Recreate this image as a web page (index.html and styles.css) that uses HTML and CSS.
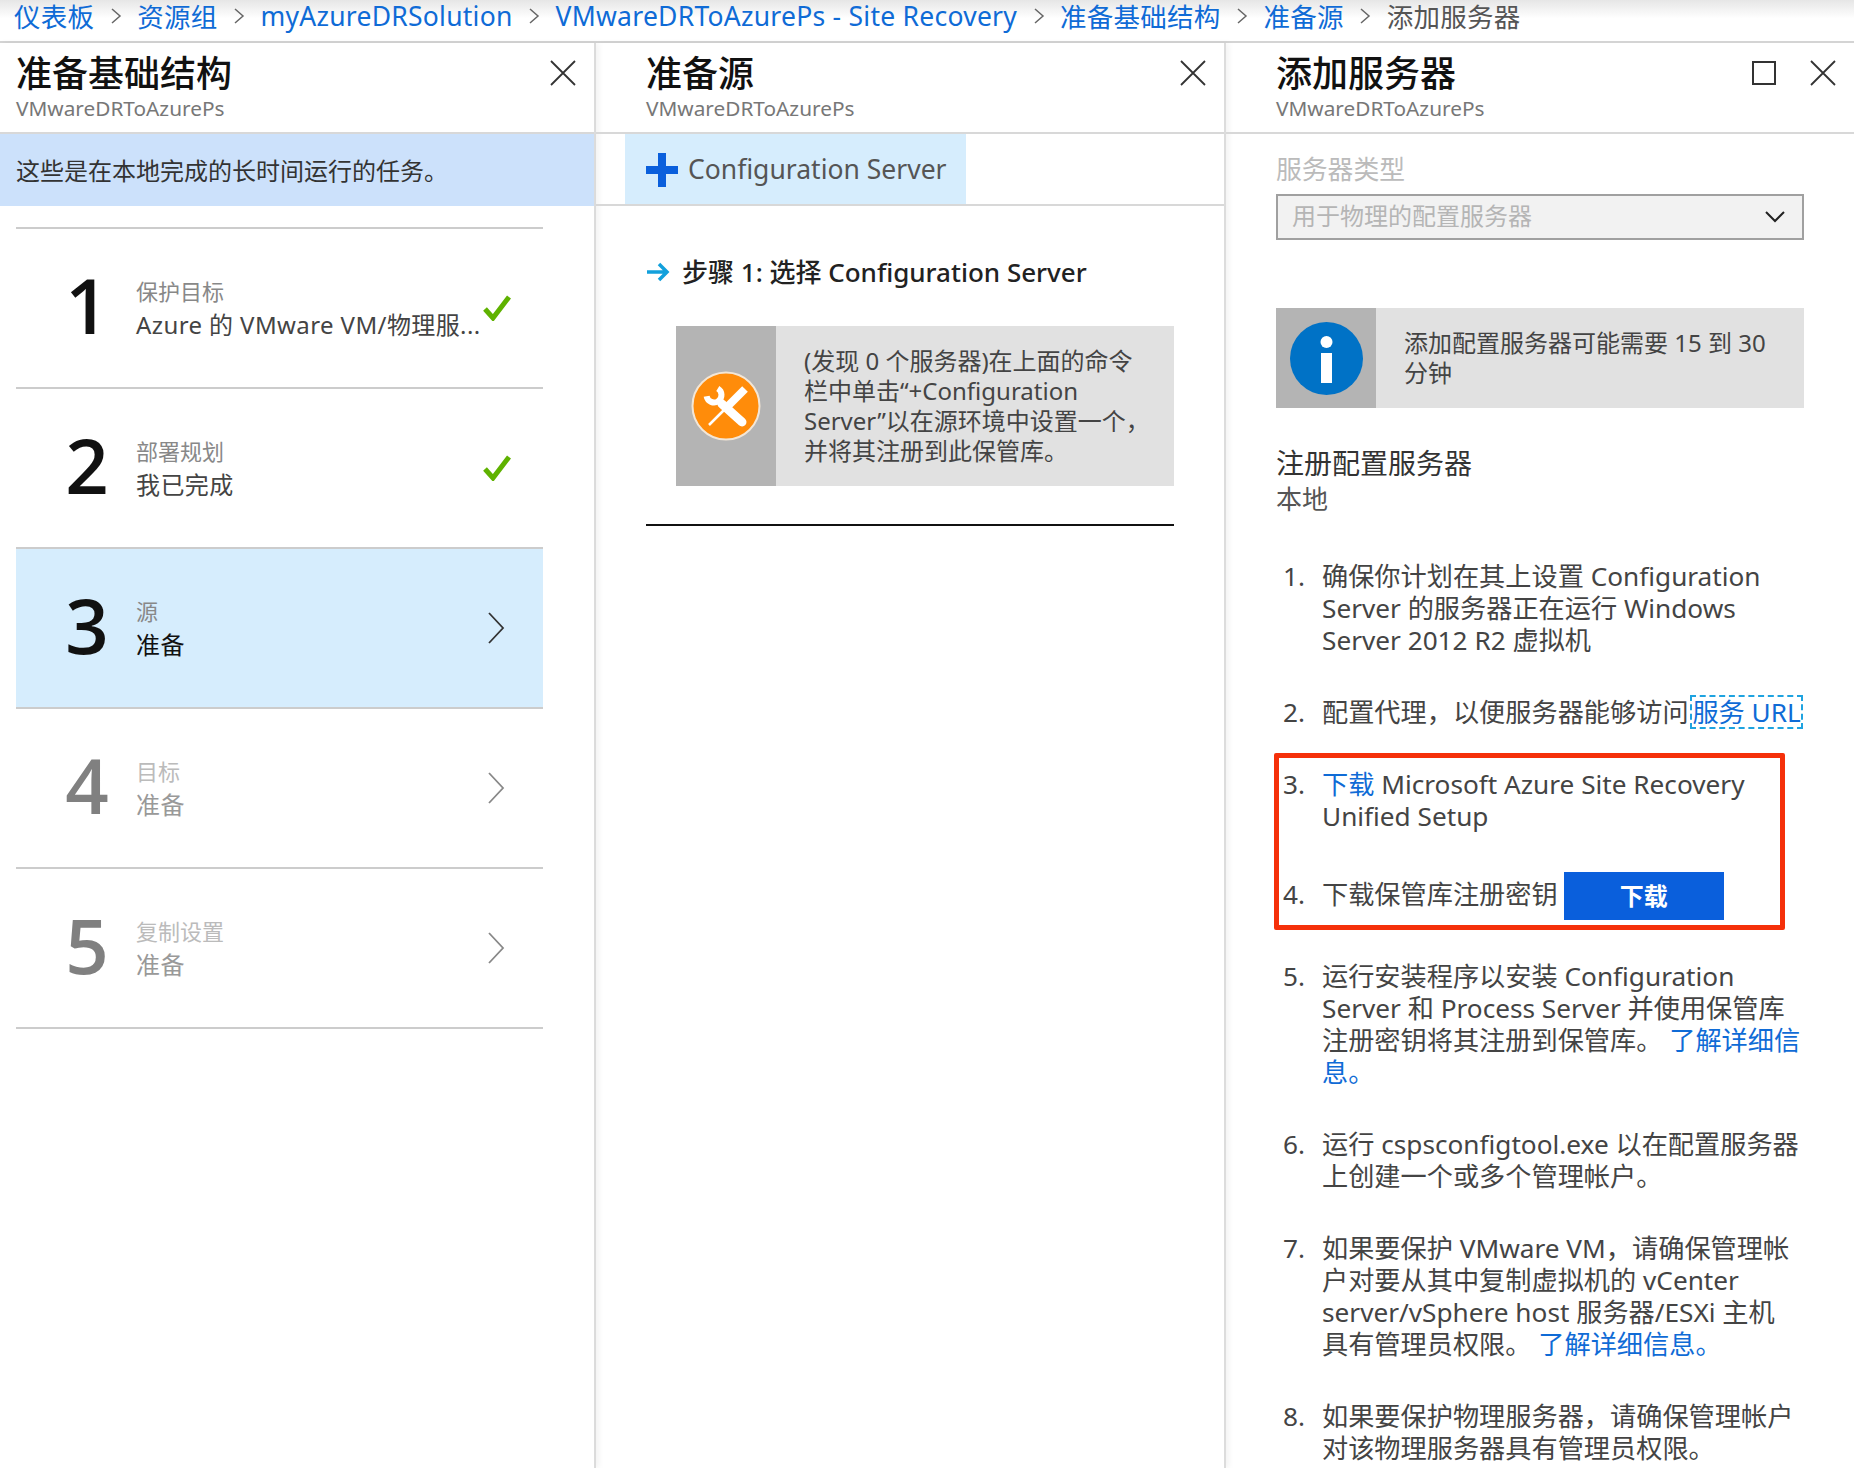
FILE: index.html
```html
<!doctype html>
<html lang="zh-CN">
  <head>
    <meta charset="utf-8">
    <title>添加服务器</title>
    <link rel="stylesheet" href="styles.css">
  </head>
  <body>
    <nav class="crumbs">
      <a href="#">仪表板</a>
      <svg class="crumb-sep" viewBox="0 0 12 18"><path d="M2 2l8 7-8 7"/></svg>
      <a href="#">资源组</a>
      <svg class="crumb-sep" viewBox="0 0 12 18"><path d="M2 2l8 7-8 7"/></svg>
      <a href="#">myAzureDRSolution</a>
      <svg class="crumb-sep" viewBox="0 0 12 18"><path d="M2 2l8 7-8 7"/></svg>
      <a href="#">VMwareDRToAzurePs - Site Recovery</a>
      <svg class="crumb-sep" viewBox="0 0 12 18"><path d="M2 2l8 7-8 7"/></svg>
      <a href="#">准备基础结构</a>
      <svg class="crumb-sep" viewBox="0 0 12 18"><path d="M2 2l8 7-8 7"/></svg>
      <a href="#">准备源</a>
      <svg class="crumb-sep" viewBox="0 0 12 18"><path d="M2 2l8 7-8 7"/></svg>
      <span>添加服务器</span>
    </nav>

    <main class="panels">
      <section class="panel panel-infra">
        <header class="head">
          <div class="head-text">
            <h1>准备基础结构</h1>
            <div class="sub">VMwareDRToAzurePs</div>
          </div>
          <svg class="close" viewBox="0 0 26 26"><path d="M1 1l24 24M25 1L1 25"/></svg>
        </header>
        <div class="band">这些是在本地完成的长时间运行的任务。</div>
        <div class="steps">
          <div class="step">
            <div class="num">1</div>
            <div class="step-text">
              <div class="step-label">保护目标</div>
              <div class="step-value">Azure 的 VMware VM/物理服...</div>
            </div>
            <svg class="check" viewBox="0 0 28 26"><path d="M2 14l8 9L26 2"/></svg>
          </div>
          <div class="step">
            <div class="num">2</div>
            <div class="step-text">
              <div class="step-label">部署规划</div>
              <div class="step-value">我已完成</div>
            </div>
            <svg class="check" viewBox="0 0 28 26"><path d="M2 14l8 9L26 2"/></svg>
          </div>
          <div class="step active">
            <div class="num">3</div>
            <div class="step-text">
              <div class="step-label">源</div>
              <div class="step-value">准备</div>
            </div>
            <svg class="arrow" viewBox="0 0 18 32"><path d="M2 1l14 15L2 31"/></svg>
          </div>
          <div class="step off">
            <div class="num">4</div>
            <div class="step-text">
              <div class="step-label">目标</div>
              <div class="step-value">准备</div>
            </div>
            <svg class="arrow" viewBox="0 0 18 32"><path d="M2 1l14 15L2 31"/></svg>
          </div>
          <div class="step off">
            <div class="num">5</div>
            <div class="step-text">
              <div class="step-label">复制设置</div>
              <div class="step-value">准备</div>
            </div>
            <svg class="arrow" viewBox="0 0 18 32"><path d="M2 1l14 15L2 31"/></svg>
          </div>
        </div>
      </section>

      <section class="panel panel-source">
        <header class="head">
          <div class="head-text">
            <h1>准备源</h1>
            <div class="sub">VMwareDRToAzurePs</div>
          </div>
          <svg class="close" viewBox="0 0 26 26"><path d="M1 1l24 24M25 1L1 25"/></svg>
        </header>
        <div class="toolbar">
          <button class="add-btn">
            <svg class="plus" viewBox="0 0 32 34"><path d="M12 0h8v13h12v8H20v13h-8V21H0v-8h12z"/></svg>
            Configuration Server
          </button>
        </div>
        <div class="source-body">
          <h2 class="step-title">
            <svg class="step-arrow" viewBox="0 0 24 20"><path d="M1 10h20M13 2l8 8-8 8"/></svg>
            步骤 1: 选择 Configuration Server
          </h2>
          <div class="note">
            <div class="note-icon">
              <svg class="tools" viewBox="0 0 70 70">
                <circle cx="35" cy="35" r="33.5" fill="#ff8c0a" stroke="#f3e6d6" stroke-width="2"/>
                <path d="M18 54L38 34" fill="none" stroke="#fff" stroke-width="2.5"/>
                <path d="M36 36L54 18" fill="none" stroke="#fff" stroke-width="8"/>
                <path d="M31 33L51 51" fill="none" stroke="#fff" stroke-width="9" stroke-linecap="round"/>
                <path d="M26.8 17.5A7.5 7.5 0 1 1 15.6 25.3" fill="none" stroke="#fff" stroke-width="6"/>
              </svg>
            </div>
            <div class="note-text">(发现 0 个服务器)在上面的命令<br>栏中单击“+Configuration<br>Server”以在源环境中设置一个，<br>并将其注册到此保管库。</div>
          </div>
          <hr class="rule">
        </div>
      </section>

      <section class="panel panel-server">
        <header class="head">
          <div class="head-text">
            <h1>添加服务器</h1>
            <div class="sub">VMwareDRToAzurePs</div>
          </div>
          <svg class="maximize" viewBox="0 0 24 24"><path d="M1 1h22v22H1z"/></svg>
          <svg class="close" viewBox="0 0 26 26"><path d="M1 1l24 24M25 1L1 25"/></svg>
        </header>
        <div class="server-body">
          <div class="field-label">服务器类型</div>
          <div class="select">
            <span class="select-text">用于物理的配置服务器</span>
            <svg class="select-caret" viewBox="0 0 20 12"><path d="M1 1l9 9 9-9"/></svg>
          </div>
          <div class="note info">
            <div class="note-icon">
              <svg class="info-icon" viewBox="0 0 73 73">
                <circle cx="36.5" cy="36.5" r="36.5" fill="#0072c6"/>
                <circle cx="36.5" cy="20" r="6" fill="#fff"/>
                <rect x="31" y="31" width="11" height="30" fill="#fff"/>
              </svg>
            </div>
            <div class="note-text">添加配置服务器可能需要 15 到 30<br>分钟</div>
          </div>
          <div class="register-title">注册配置服务器</div>
          <div class="register-sub">本地</div>
          <div class="todo-wrap">
            <div class="redbox"></div>
            <ol class="todo">
              <li><span class="todo-num">1.</span><div>确保你计划在其上设置 Configuration<br>Server 的服务器正在运行 Windows<br>Server 2012 R2 虚拟机</div></li>
              <li><span class="todo-num">2.</span><div>配置代理，以便服务器能够访问 <a href="#" class="focus-link">服务 URL</a></div></li>
              <li><span class="todo-num">3.</span><div><a href="#">下载</a> Microsoft Azure Site Recovery<br>Unified Setup</div></li>
              <li class="todo-btn"><span class="todo-num">4.</span><div>下载保管库注册密钥</div><button class="download">下载</button></li>
              <li><span class="todo-num">5.</span><div>运行安装程序以安装 Configuration<br>Server 和 Process Server 并使用保管库<br>注册密钥将其注册到保管库。 <a href="#">了解详细信<br>息。</a></div></li>
              <li><span class="todo-num">6.</span><div>运行 cspsconfigtool.exe 以在配置服务器<br>上创建一个或多个管理帐户。</div></li>
              <li><span class="todo-num">7.</span><div>如果要保护 VMware VM，请确保管理帐<br>户对要从其中复制虚拟机的 vCenter<br>server/vSphere host 服务器/ESXi 主机<br>具有管理员权限。 <a href="#">了解详细信息。</a></div></li>
              <li><span class="todo-num">8.</span><div>如果要保护物理服务器，请确保管理帐户<br>对该物理服务器具有管理员权限。</div></li>
            </ol>
          </div>
        </div>
      </section>
    </main>
  </body>
</html>
```

FILE: styles.css
```css
* {
  box-sizing: border-box;
}
html, body {
  height: 100%;
}
body {
  margin: 0;
  height: 1468px;
  overflow: hidden;
  background: #fff;
  color: #333;
  font-family: "Noto Sans", "Noto Sans CJK SC", sans-serif;
  font-size: 24px;
}
a {
  color: #0f6bd6;
  text-decoration: none;
}

/* breadcrumb */
.crumbs {
  height: 43px;
  padding: 0 0 10px 14px;
  display: flex;
  align-items: center;
  gap: 15.5px;
  font-size: 26.5px;
  letter-spacing: .25px;
  white-space: nowrap;
  background: linear-gradient(#e6e6e6, #fff 45%);
  border-bottom: 2px solid #d4d4d4;
}
.crumbs span {
  color: #555;
}
.crumb-sep {
  width: 12px;
  height: 18px;
  fill: none;
  stroke: #666;
  stroke-width: 1.5;
}

/* panels */
.panels {
  display: grid;
  grid-template-columns: 596px 630px 628px;
  height: 1425px;
}
.panel {
  border-right: 2px solid #dcdcdc;
  box-shadow: 3px 0 6px rgba(0, 0, 0, .05);
  overflow: hidden;
}
.panel-server {
  border-right: none;
  box-shadow: none;
}
.head {
  height: 91px;
  padding: 9px 18px 0 50px;
  display: flex;
  align-items: flex-start;
  border-bottom: 2px solid #d8d8d8;
}
.panel-infra .head {
  padding-left: 16px;
}
.head-text {
  flex: 1;
}
.head h1 {
  margin: 0;
  font-size: 36px;
  line-height: 44px;
  font-weight: 500;
  color: #111;
}
.sub {
  font-size: 20.8px;
  line-height: 25px;
  color: #777;
}
.close {
  width: 26px;
  height: 26px;
  margin-top: 8px;
  fill: none;
  stroke: #333;
  stroke-width: 1.8;
}
.maximize {
  width: 24px;
  height: 24px;
  margin: 9px 34px 0 0;
  fill: none;
  stroke: #333;
  stroke-width: 2;
}

/* first panel */
.band {
  height: 72px;
  padding: 0 0 2px 16px;
  display: flex;
  align-items: center;
  background: #cce1fb;
  color: #333;
}
.steps {
  margin: 21px 51px 0 16px;
  border-top: 2px solid #ccc;
}
.step {
  height: 160px;
  padding: 0 32px 0 30px;
  display: flex;
  align-items: center;
  border-bottom: 2px solid #ccc;
}
.num {
  width: 80px;
  margin-bottom: 6px;
  padding-left: 2px;
  text-align: center;
  font-size: 76px;
  font-weight: 600;
  line-height: 1;
  color: #111;
  font-family: "Open Sans", sans-serif;
}
.step-text {
  flex: 1;
  margin-left: 10px;
  line-height: 33px;
  white-space: nowrap;
}
.step-label {
  font-size: 22px;
  color: #888;
}
.step-value {
  letter-spacing: .4px;
  color: #444;
}
.check {
  width: 28px;
  height: 26px;
  fill: none;
  stroke: #5fb200;
  stroke-width: 5;
}
.arrow {
  width: 18px;
  height: 32px;
  margin-right: 6px;
  fill: none;
  stroke: #333;
  stroke-width: 1.8;
}
.active {
  background: #d6edfd;
}
.active .step-value {
  color: #111;
}
.off .num {
  color: #808080;
}
.off .step-label {
  color: #bbb;
}
.off .step-value {
  color: #999;
}
.off .arrow {
  stroke: #888;
}

/* second panel */
.toolbar {
  height: 72px;
  padding-left: 29px;
  border-bottom: 2px solid #d8d8d8;
}
.add-btn {
  height: 70px;
  width: 341px;
  padding: 0 0 0 21px;
  display: flex;
  align-items: center;
  gap: 10px;
  border: none;
  background: #d6edfd;
  color: #555;
  font: inherit;
  font-size: 26.5px;
  white-space: nowrap;
}
.plus {
  width: 32px;
  height: 34px;
  margin-top: 2px;
  fill: #0a5fdc;
}
.source-body {
  padding: 44px 50px 0;
}
.step-title {
  margin: 0;
  display: flex;
  align-items: center;
  gap: 12px;
  font-size: 26px;
  line-height: 44px;
  font-weight: 500;
  color: #222;
  white-space: nowrap;
}
.step-arrow {
  width: 24px;
  height: 20px;
  fill: none;
  stroke: #12a0dc;
  stroke-width: 3.5;
}
.note {
  display: flex;
  background: #e1e1e1;
}
.source-body .note {
  margin: 32px 0 0 30px;
  height: 160px;
}
.note-icon {
  width: 100px;
  flex: none;
  display: flex;
  align-items: center;
  justify-content: center;
  background: #b4b4b4;
}
.note-text {
  padding-left: 28px;
  align-self: center;
  line-height: 30.2px;
  color: #444;
  white-space: nowrap;
}
.tools {
  width: 70px;
  height: 70px;
}
.info-icon {
  width: 73px;
  height: 73px;
}
.rule {
  margin: 38px 0 0;
  border: none;
  border-top: 2px solid #111;
}

/* third panel */
.server-body {
  padding: 20px 50px 0;
}
.field-label {
  font-size: 25.8px;
  line-height: 30px;
  color: #bbb;
}
.select {
  margin-top: 10px;
  height: 46px;
  padding: 0 17px 0 14px;
  display: flex;
  align-items: center;
  justify-content: space-between;
  background: #f2f2f2;
  border: 2px solid #a0a0a0;
  color: #b5b5b5;
}
.select-text {
  margin-bottom: 6px;
}
.select-caret {
  width: 20px;
  height: 12px;
  fill: none;
  stroke: #222;
  stroke-width: 2;
}
.info {
  margin-top: 68px;
  height: 100px;
}
.register-title {
  margin-top: 37px;
  font-size: 28px;
  line-height: 36px;
  color: #333;
}
.register-sub {
  font-size: 26px;
  line-height: 36px;
  color: #555;
}
.todo-wrap {
  position: relative;
  margin-top: 43px;
}
.redbox {
  position: absolute;
  top: 193px;
  left: -2px;
  width: 511px;
  height: 177px;
  border: 5px solid #f5300a;
  border-radius: 2px;
}
.todo {
  margin: 0;
  padding: 0;
  list-style: none;
  display: flex;
  flex-direction: column;
  gap: 40px;
  font-size: 26.2px;
  line-height: 32px;
  color: #444;
  white-space: nowrap;
}
.todo li {
  display: flex;
}
.todo-num {
  width: 46px;
  padding-left: 7px;
  flex: none;
}
.todo-btn {
  align-items: center;
}
.todo-btn div,
.todo-btn .todo-num {
  margin-bottom: 4px;
}
.focus-link {
  display: inline-block;
  margin-left: -3px;
  line-height: 30px;
  outline: 2px dashed #1ea3e0;
}
.download {
  margin-left: 6px;
  width: 160px;
  height: 48px;
  border: none;
  background: #0a5fdc;
  color: #fff;
  font: inherit;
  font-size: 24px;
  font-weight: 700;
}
```
